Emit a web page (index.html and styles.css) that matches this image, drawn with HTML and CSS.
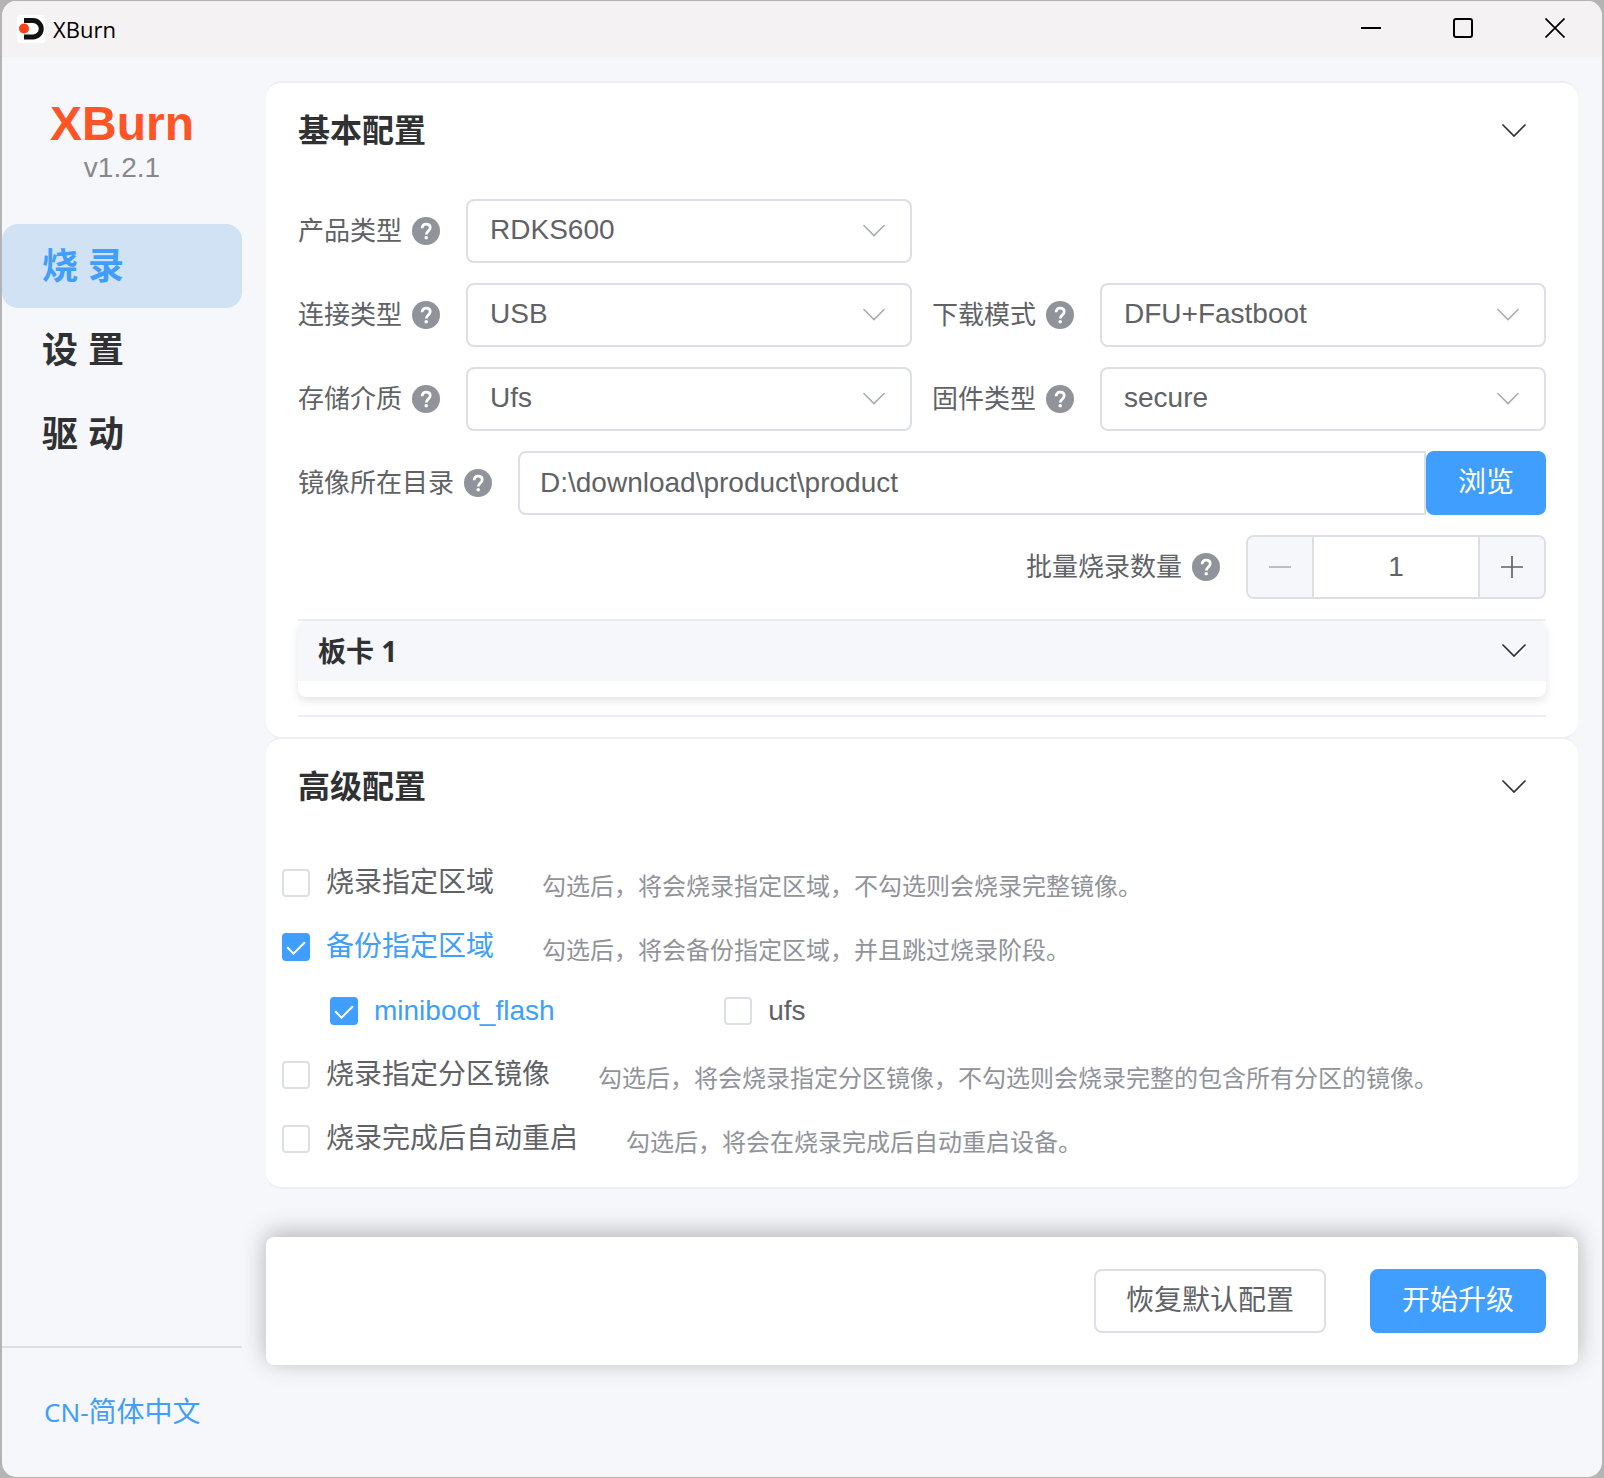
FILE: index.html
```html
<!DOCTYPE html>
<html lang="zh-CN">
<head>
    <meta charset="UTF-8">
    <meta name="viewport" content="width=device-width, initial-scale=1.0">
    <title>XBurn</title>
    <link rel="stylesheet" href="styles.css">
</head>
<body>
    <!-- Shared icons -->
    <svg class="icon-defs" aria-hidden="true">
        <symbol id="icon-help" viewBox="0 0 28 28">
            <circle cx="14" cy="14" r="14" fill="#909399"/>
            <path d="M10.1 11.2c0-2.7 1.6-4.1 4-4.1s4.1 1.4 4.1 3.7c0 3-3.9 3.3-3.9 6.7" fill="none" stroke="#fff" stroke-width="2.8"/>
            <circle cx="14.2" cy="20.7" r="1.8" fill="#fff"/>
        </symbol>
        <symbol id="icon-down" viewBox="0 0 24 24">
            <path d="M1 6l11 11 11-11" fill="none" stroke="currentColor" stroke-width="1.7" stroke-linecap="round"/>
        </symbol>
    </svg>

    <div class="window">
        <header class="titlebar">
            <svg class="app-icon" viewBox="0 0 28 28" aria-hidden="true">
                <rect width="28" height="28" rx="3" fill="#fff"/>
                <path d="M7 5.5h9a8 8 0 0 1 0 16.500H7" fill="none" stroke="#111" stroke-width="5"/>
                <circle cx="7" cy="13.500" r="5" fill="#ff4013"/>
            </svg>
            <span class="app-name">XBurn</span>
            <div class="window-buttons">
                <button type="button" aria-label="最小化">
                    <svg viewBox="0 0 20 20"><path d="M0 10h20" stroke="#000" stroke-width="2"/></svg>
                </button>
                <button type="button" aria-label="最大化">
                    <svg viewBox="0 0 20 20"><rect x="1" y="1" width="18" height="18" rx="2" fill="none" stroke="#000" stroke-width="2"/></svg>
                </button>
                <button type="button" aria-label="关闭">
                    <svg viewBox="0 0 20 20"><path d="M.5 .5l19 19M19.5 .5l-19 19" stroke="#000" stroke-width="1.7"/></svg>
                </button>
            </div>
        </header>

        <div class="layout">
            <aside class="sidebar">
                <div class="brand">
                    <h1>XBurn</h1>
                    <p>v1.2.1</p>
                </div>
                <nav class="menu">
                    <a class="active" href="#burn">烧 录</a>
                    <a href="#settings">设 置</a>
                    <a href="#driver">驱 动</a>
                </nav>
                <div class="language">
                    <a href="#language"><span class="lang-code">CN-</span>简体中文</a>
                </div>
            </aside>

            <main class="content">
                <section class="card">
                    <h2>
                        <button class="card-header" type="button" aria-expanded="true">
                            基本配置
                            <svg class="chevron"><use href="#icon-down"/></svg>
                        </button>
                    </h2>
                    <div class="card-body">
                        <div class="form-grid">
                            <div class="field">
                                <label for="product">产品类型</label>
                                <svg class="help"><use href="#icon-help"/></svg>
                                <div class="select">
                                    <select id="product"><option>RDKS600</option></select>
                                    <svg class="arrow"><use href="#icon-down"/></svg>
                                </div>
                            </div>
                            <div class="field new-row">
                                <label for="connection">连接类型</label>
                                <svg class="help"><use href="#icon-help"/></svg>
                                <div class="select">
                                    <select id="connection"><option>USB</option></select>
                                    <svg class="arrow"><use href="#icon-down"/></svg>
                                </div>
                            </div>
                            <div class="field">
                                <label for="mode">下载模式</label>
                                <svg class="help"><use href="#icon-help"/></svg>
                                <div class="select">
                                    <select id="mode"><option>DFU+Fastboot</option></select>
                                    <svg class="arrow"><use href="#icon-down"/></svg>
                                </div>
                            </div>
                            <div class="field">
                                <label for="storage">存储介质</label>
                                <svg class="help"><use href="#icon-help"/></svg>
                                <div class="select">
                                    <select id="storage"><option>Ufs</option></select>
                                    <svg class="arrow"><use href="#icon-down"/></svg>
                                </div>
                            </div>
                            <div class="field">
                                <label for="firmware">固件类型</label>
                                <svg class="help"><use href="#icon-help"/></svg>
                                <div class="select">
                                    <select id="firmware"><option>secure</option></select>
                                    <svg class="arrow"><use href="#icon-down"/></svg>
                                </div>
                            </div>
                            <div class="field wide">
                                <label for="path">镜像所在目录</label>
                                <svg class="help"><use href="#icon-help"/></svg>
                                <div class="path-group">
                                    <input id="path" type="text" value="D:\download\product\product">
                                    <button class="btn btn-primary" type="button">浏览</button>
                                </div>
                            </div>
                            <div class="field wide align-right">
                                <label for="count">批量烧录数量</label>
                                <svg class="help"><use href="#icon-help"/></svg>
                                <div class="stepper">
                                    <button type="button" aria-label="减少" disabled>
                                        <svg viewBox="0 0 24 24"><path d="M1 12h22" stroke="currentColor" stroke-width="1.700"/></svg>
                                    </button>
                                    <input id="count" type="text" inputmode="numeric" value="1">
                                    <button type="button" aria-label="增加">
                                        <svg viewBox="0 0 24 24"><path d="M1 12h22M12 1v22" stroke="currentColor" stroke-width="1.700"/></svg>
                                    </button>
                                </div>
                            </div>
                        </div>

                        <div class="boards">
                            <div class="board">
                                <h3>
                                    <button class="board-header" type="button" aria-expanded="true">
                                        板卡 1
                                        <svg class="chevron"><use href="#icon-down"/></svg>
                                    </button>
                                </h3>
                            </div>
                        </div>
                    </div>
                </section>

                <section class="card">
                    <h2>
                        <button class="card-header" type="button" aria-expanded="true">
                            高级配置
                            <svg class="chevron"><use href="#icon-down"/></svg>
                        </button>
                    </h2>
                    <div class="options">
                        <div class="option">
                            <label class="check"><input type="checkbox"><span>烧录指定区域</span></label>
                            <span class="hint">勾选后，将会烧录指定区域，不勾选则会烧录完整镜像。</span>
                        </div>
                        <div class="option">
                            <label class="check"><input type="checkbox" checked><span>备份指定区域</span></label>
                            <span class="hint">勾选后，将会备份指定区域，并且跳过烧录阶段。</span>
                        </div>
                        <div class="option sub-options">
                            <label class="check"><input type="checkbox" checked><span>miniboot_flash</span></label>
                            <label class="check"><input type="checkbox"><span>ufs</span></label>
                        </div>
                        <div class="option">
                            <label class="check"><input type="checkbox"><span>烧录指定分区镜像</span></label>
                            <span class="hint">勾选后，将会烧录指定分区镜像，不勾选则会烧录完整的包含所有分区的镜像。</span>
                        </div>
                        <div class="option">
                            <label class="check"><input type="checkbox"><span>烧录完成后自动重启</span></label>
                            <span class="hint">勾选后，将会在烧录完成后自动重启设备。</span>
                        </div>
                    </div>
                </section>

                <div class="action-bar">
                    <button class="btn" type="button">恢复默认配置</button>
                    <button class="btn btn-primary" type="button">开始升级</button>
                </div>
            </main>
        </div>
    </div>
</body>
</html>
```

FILE: styles.css
```css
* {
    box-sizing: border-box;
}
body {
    margin: 0;
    background-color: #b4b4b4;
    color: #606266;
    font-family: "Liberation Sans", "Noto Sans CJK SC", sans-serif;
    font-size: 28px;
    line-height: 40px;
}
h1, h2, h3, p {
    margin: 0;
}
button, input, select {
    font: inherit;
    color: inherit;
    margin: 0;
}
a {
    text-decoration: none;
}
svg {
    display: block;
    flex-shrink: 0;
}
.icon-defs {
    display: none;
}
.window {
    display: flex;
    flex-direction: column;
    min-height: 100vh;
    border: 1px solid #b4b4b4;
    border-width: 1px 2px;
    border-radius: 16px;
    background-color: #f5f7fa;
    overflow: hidden;
}

/* Title bar */
.titlebar {
    display: flex;
    align-items: center;
    height: 56px;
    padding-left: 15px;
    background-color: #f4f2f2;
}
.app-icon {
    width: 28px;
    height: 28px;
}
.app-name {
    margin-left: 8px;
    color: #000;
    font-family: "Open Sans", sans-serif;
    font-size: 22px;
}
.window-buttons {
    display: flex;
    margin-left: auto;
    padding-right: 1px;
}
.window-buttons button {
    display: flex;
    align-items: center;
    justify-content: center;
    width: 92px;
    height: 56px;
    padding: 0 0 2px;
    border: none;
    background: none;
}
.window-buttons svg {
    width: 20px;
    height: 20px;
}

/* Sidebar */
.layout {
    display: flex;
    flex: 1;
}
.sidebar {
    display: flex;
    flex-direction: column;
    width: 240px;
    flex-shrink: 0;
}
.brand {
    padding: 39px 0 40px;
    text-align: center;
}
.brand h1 {
    color: #ff5426;
    font-size: 48px;
    line-height: 56px;
}
.brand p {
    color: #888;
    line-height: 32px;
}
.menu a {
    display: block;
    padding: 2px 0 0 40px;
    border-radius: 16px;
    color: #303133;
    font-size: 36px;
    font-weight: bold;
    line-height: 82px;
}
.menu a.active {
    background-color: #d1e2f5;
    color: #409eff;
}
.language {
    margin-top: auto;
    padding: 44px 42px;
    border-top: 2px solid #dcdfe6;
    white-space: nowrap;
}
.language a {
    color: #409eff;
}
.lang-code {
    font-family: "Noto Sans", sans-serif;
    font-size: 26px;
}

/* Cards */
.content {
    flex: 1;
    min-width: 0;
    padding: 24px;
}
.card {
    border: solid #ebeef5;
    border-width: 2px 0;
    border-radius: 16px;
    background-color: #fff;
}
.card + .card {
    margin-top: -2px;
}
.card-header, .board-header {
    display: flex;
    align-items: center;
    justify-content: space-between;
    width: 100%;
    border: none;
    background: none;
    color: #303133;
    font-weight: bold;
    text-align: left;
}
.card-header {
    height: 96px;
    padding: 0 52px 0 32px;
    font-size: 32px;
}
.chevron {
    width: 24px;
    height: 24px;
}
.card-body {
    padding: 20px 32px;
}

/* Form */
.form-grid {
    display: grid;
    grid-template-columns: 1fr 1fr;
    gap: 20px;
}
.field {
    display: flex;
    align-items: center;
    min-width: 0;
}
.field label {
    font-size: 26px;
    white-space: nowrap;
}
.new-row {
    grid-column-start: 1;
}
.wide {
    grid-column: 1 / -1;
}
.align-right {
    justify-content: flex-end;
}
.help {
    width: 28px;
    height: 28px;
    margin: 0 26px 0 10px;
}
.select {
    display: grid;
    align-items: center;
    flex: 1;
    min-width: 0;
}
.select select, .arrow {
    grid-area: 1 / 1;
}
.select select {
    width: 100%;
    height: 64px;
    padding: 0 64px 2px 22px;
    border: 2px solid #dcdfe6;
    border-radius: 8px;
    background-color: #fff;
    appearance: none;
}
.arrow {
    justify-self: end;
    width: 22px;
    height: 22px;
    margin-right: 27px;
    color: #a8abb2;
    pointer-events: none;
}
.path-group {
    display: flex;
    flex: 1;
    min-width: 0;
}
.path-group input {
    flex: 1;
    min-width: 0;
    height: 64px;
    padding: 0 20px;
    border: 2px solid #dcdfe6;
    border-radius: 8px 0 0 8px;
    background-color: #fff;
}
.stepper {
    display: flex;
    width: 300px;
    height: 64px;
    border: 2px solid #dcdfe6;
    border-radius: 8px;
    background-color: #fff;
    overflow: hidden;
}
.stepper button {
    display: flex;
    align-items: center;
    justify-content: center;
    width: 64px;
    padding: 0;
    border: none;
    background-color: #f5f7fa;
}
.stepper button:disabled {
    color: #a8abb2;
}
.stepper svg {
    width: 24px;
    height: 24px;
}
.stepper input {
    flex: 1;
    min-width: 0;
    padding: 0;
    border: solid #dcdfe6;
    border-width: 0 2px;
    text-align: center;
}

/* Board list */
.boards {
    margin-top: 20px;
    padding-bottom: 18px;
    border: solid #ebeef5;
    border-width: 2px 0;
}
.board {
    padding-bottom: 16px;
    border-radius: 8px;
    box-shadow: 0 4px 8px rgba(0, 0, 0, 0.1);
}
.board-header {
    height: 60px;
    padding: 0 20px;
    border-radius: 8px 8px 0 0;
    background-color: #f5f7fa;
    font-family: "Open Sans", "Noto Sans CJK SC", sans-serif;
    font-size: 28px;
}

/* Advanced options */
.options {
    padding: 16px;
}
.option {
    display: flex;
    align-items: center;
    height: 64px;
}
.check {
    display: flex;
    align-items: center;
    gap: 16px;
    white-space: nowrap;
}
.check input {
    display: grid;
    place-items: center;
    width: 28px;
    height: 28px;
    border: 2px solid #dcdfe6;
    border-radius: 4px;
    background-color: #fff;
    appearance: none;
}
.check input:checked {
    border-color: #409eff;
    background-color: #409eff;
}
.check input:checked::after {
    content: "";
    width: 8px;
    height: 15px;
    margin-bottom: 4px;
    border: solid #fff;
    border-width: 0 2px 2px 0;
    transform: rotate(45deg);
}
.check input:checked + span {
    color: #409eff;
}
.hint {
    margin: 8px 0 0 48px;
    color: #909399;
    font-size: 24px;
}
.sub-options {
    padding-left: 48px;
}
.sub-options .check {
    flex-basis: 32%;
}

/* Buttons */
.btn {
    height: 64px;
    padding: 0 30px;
    border: 2px solid #dcdfe6;
    border-radius: 8px;
    background-color: #fff;
    white-space: nowrap;
    cursor: pointer;
}
.btn-primary {
    border-color: #409eff;
    background-color: #409eff;
    color: #fff;
}
.action-bar {
    display: flex;
    justify-content: flex-end;
    gap: 44px;
    margin-top: 48px;
    padding: 32px;
    border-radius: 8px;
    background-color: #fff;
    box-shadow: 0 -4px 24px rgba(0, 0, 0, 0.28);
}
```
